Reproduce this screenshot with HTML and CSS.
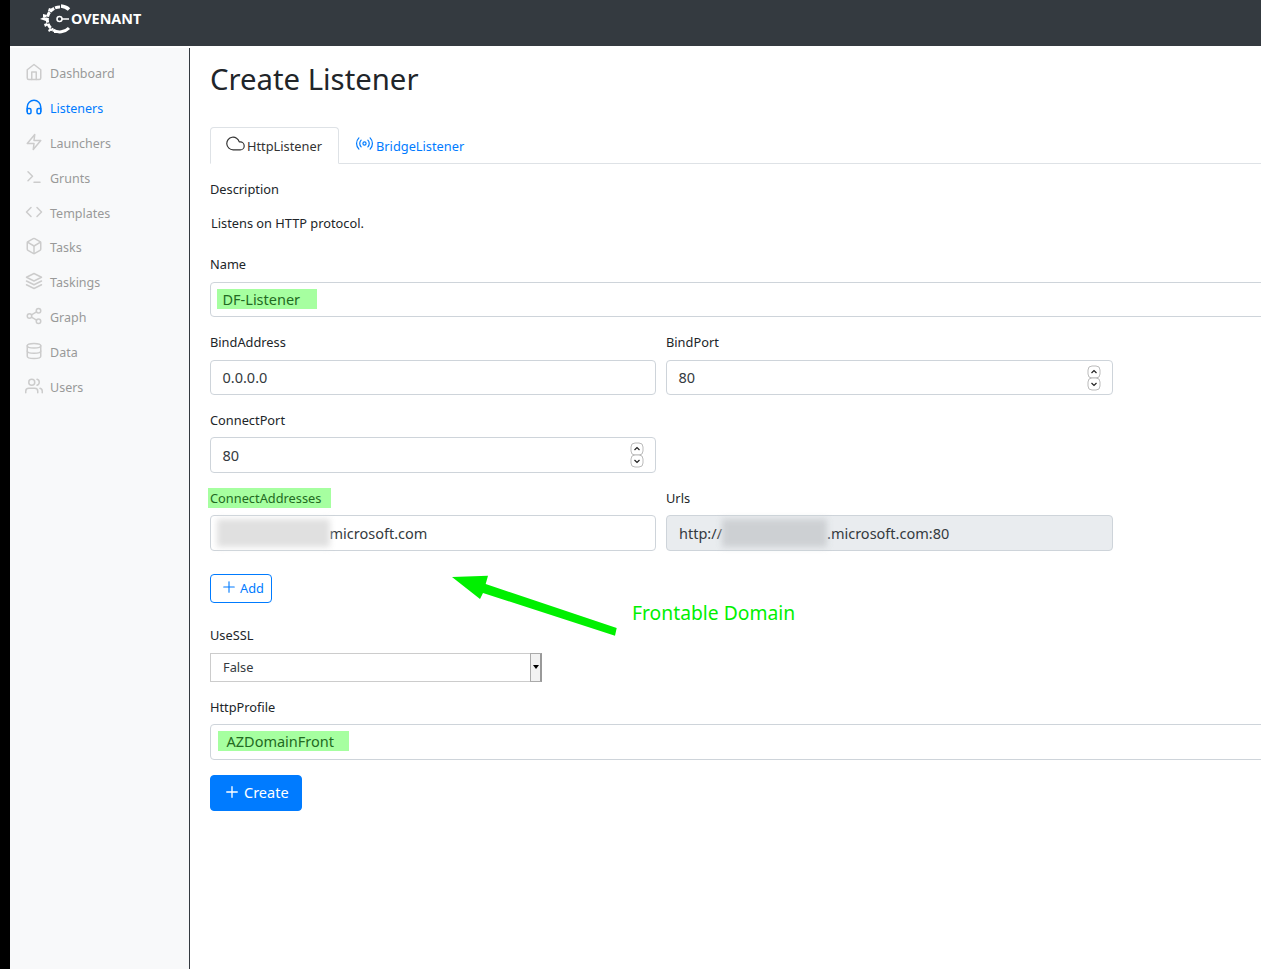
FILE: index.html
```html
<!DOCTYPE html>
<html lang="en">
<head>
    <meta charset="UTF-8">
    <meta name="viewport" content="width=device-width, initial-scale=1.0">
    <title>Create Listener</title>
    <link rel="stylesheet" href="styles.css">
</head>
<body>
    <header class="topbar">
        <a class="brand" href="#">
            <svg class="brand-mark" viewBox="0 0 36 30" width="36" height="30">
                <path d="M29 5.500a13 13 0 0 0-8-3.500" fill="none" stroke="#fff" stroke-width="3.500"/>
                <path d="M20 3a12.500 12.500 0 0 0-7 23" fill="none" stroke="#fff" stroke-width="3" stroke-dasharray="5 1"/>
                <path d="M13 26a13 13 0 0 0 16-2" fill="none" stroke="#fff" stroke-width="3"/>
                <path d="M9 4l3 1-1 3-3-1zM3 10l4 1-1 2-3 0zM0 15l4-2 3 1-1 3-3-1zM4 20l3-1 1 2-3 2zM8 26l3-2 1 2-3 2zM14 28l4-1 0 2-4 0z" fill="#fff"/>
                <circle cx="19.500" cy="15" r="2.500" fill="none" stroke="#fff" stroke-width="1.500"/>
                <path d="M22 15h7" stroke="#fff" stroke-width="1.500"/>
            </svg>
            <span class="brand-name">OVENANT</span>
        </a>
    </header>

    <div class="layout">
        <nav class="sidebar">
            <a class="nav-link" href="#">
                <svg class="icon" viewBox="0 0 24 24"><path d="M3 9l9-7 9 7v11a2 2 0 0 1-2 2H5a2 2 0 0 1-2-2z"/><polyline points="9 22 9 12 15 12 15 22"/></svg>
                Dashboard
            </a>
            <a class="nav-link active" href="#">
                <svg class="icon" viewBox="0 0 24 24"><path d="M3 18v-6a9 9 0 0 1 18 0v6"/><path d="M21 19a2 2 0 0 1-2 2h-1a2 2 0 0 1-2-2v-3a2 2 0 0 1 2-2h3zM3 19a2 2 0 0 0 2 2h1a2 2 0 0 0 2-2v-3a2 2 0 0 0-2-2H3z"/></svg>
                Listeners
            </a>
            <a class="nav-link" href="#">
                <svg class="icon" viewBox="0 0 24 24"><polygon points="13 2 3 14 12 14 11 22 21 10 12 10 13 2"/></svg>
                Launchers
            </a>
            <a class="nav-link" href="#">
                <svg class="icon" viewBox="0 0 24 24"><polyline points="4 17 10 11 4 5"/><line x1="12" y1="19" x2="20" y2="19"/></svg>
                Grunts
            </a>
            <a class="nav-link" href="#">
                <svg class="icon" viewBox="0 0 24 24"><polyline points="16 18 22 12 16 6"/><polyline points="8 6 2 12 8 18"/></svg>
                Templates
            </a>
            <a class="nav-link" href="#">
                <svg class="icon" viewBox="0 0 24 24"><path d="M21 16V8a2 2 0 0 0-1-1.730l-7-4a2 2 0 0 0-2 0l-7 4A2 2 0 0 0 3 8v8a2 2 0 0 0 1 1.730l7 4a2 2 0 0 0 2 0l7-4A2 2 0 0 0 21 16z"/><polyline points="3.270 6.960 12 12.010 20.730 6.960"/><line x1="12" y1="22.080" x2="12" y2="12"/></svg>
                Tasks
            </a>
            <a class="nav-link" href="#">
                <svg class="icon" viewBox="0 0 24 24"><polygon points="12 2 2 7 12 12 22 7 12 2"/><polyline points="2 17 12 22 22 17"/><polyline points="2 12 12 17 22 12"/></svg>
                Taskings
            </a>
            <a class="nav-link" href="#">
                <svg class="icon" viewBox="0 0 24 24"><circle cx="18" cy="5" r="3"/><circle cx="6" cy="12" r="3"/><circle cx="18" cy="19" r="3"/><line x1="8.590" y1="13.510" x2="15.420" y2="17.490"/><line x1="15.410" y1="6.510" x2="8.590" y2="10.490"/></svg>
                Graph
            </a>
            <a class="nav-link" href="#">
                <svg class="icon" viewBox="0 0 24 24"><ellipse cx="12" cy="5" rx="9" ry="3"/><path d="M21 12c0 1.660-4 3-9 3s-9-1.340-9-3"/><path d="M3 5v14c0 1.660 4 3 9 3s9-1.340 9-3V5"/></svg>
                Data
            </a>
            <a class="nav-link" href="#">
                <svg class="icon" viewBox="0 0 24 24"><path d="M17 21v-2a4 4 0 0 0-4-4H5a4 4 0 0 0-4 4v2"/><circle cx="9" cy="7" r="4"/><path d="M23 21v-2a4 4 0 0 0-3-3.870"/><path d="M16 3.130a4 4 0 0 1 0 7.750"/></svg>
                Users
            </a>
        </nav>

        <main class="content">
            <h1 class="page-title">Create Listener</h1>

            <div class="tabs">
                <a class="tab active" href="#">
                    <svg class="icon" viewBox="0 0 24 24"><path d="M18 10h-1.260A8 8 0 1 0 9 20h9a5 5 0 0 0 0-10z"/></svg>HttpListener
                </a>
                <a class="tab" href="#">
                    <svg class="icon" viewBox="0 0 24 24"><circle cx="12" cy="12" r="2"/><path d="M16.240 7.760a6 6 0 0 1 0 8.490m-8.480-.010a6 6 0 0 1 0-8.490m11.310-2.820a10 10 0 0 1 0 14.140m-14.140 0a10 10 0 0 1 0-14.140"/></svg>BridgeListener
                </a>
            </div>

            <form class="listener-form">
                <div class="label">Description</div>
                <p class="description">Listens on HTTP protocol.</p>

                <div class="field">
                    <div class="label">Name</div>
                    <div class="input marked"><span class="mark name-mark">DF-Listener</span></div>
                </div>

                <div class="form-grid">
                    <div class="field">
                        <div class="label">BindAddress</div>
                        <div class="input">0.0.0.0</div>
                    </div>
                    <div class="field">
                        <div class="label">BindPort</div>
                        <div class="input number">80
                            <svg class="spinner" viewBox="0 0 14 26" width="14" height="26"><rect x="1" y="1" width="12" height="12" rx="4"/><rect x="1" y="13" width="12" height="12" rx="4"/><path d="M4.500 8l2.500-2.500 2.500 2.500M4.500 18l2.500 2.500 2.500-2.500"/></svg>
                        </div>
                    </div>
                    <div class="field tall">
                        <div class="label">ConnectPort</div>
                        <div class="input number">80
                            <svg class="spinner" viewBox="0 0 14 26" width="14" height="26"><rect x="1" y="1" width="12" height="12" rx="4"/><rect x="1" y="13" width="12" height="12" rx="4"/><path d="M4.500 8l2.500-2.500 2.500 2.500M4.500 18l2.500 2.500 2.500-2.500"/></svg>
                        </div>
                    </div>
                    <div class="field-spacer"></div>
                    <div class="field tall">
                        <div class="label"><span class="mark label-mark">ConnectAddresses</span></div>
                        <div class="input"><span class="blur blur-left"></span>microsoft.com</div>
                    </div>
                    <div class="field tall">
                        <div class="label">Urls</div>
                        <div class="input readonly">http://<span class="blur blur-url"></span>.microsoft.com:80</div>
                    </div>
                </div>

                <button class="btn btn-outline" type="button">
                    <svg class="icon" viewBox="0 0 24 24"><line x1="12" y1="5" x2="12" y2="19"/><line x1="5" y1="12" x2="19" y2="12"/></svg>Add
                </button>

                <div class="field select-field">
                    <div class="label">UseSSL</div>
                    <div class="select">False<span class="select-arrow"></span></div>
                </div>

                <div class="field tall">
                    <div class="label">HttpProfile</div>
                    <div class="input marked"><span class="mark profile-mark">AZDomainFront</span></div>
                </div>

                <button class="btn btn-primary" type="button">
                    <svg class="icon" viewBox="0 0 24 24"><line x1="12" y1="5" x2="12" y2="19"/><line x1="5" y1="12" x2="19" y2="12"/></svg>Create
                </button>
            </form>

            <!-- annotation drawn over the screenshot -->
            <svg class="note-arrow" viewBox="0 0 170 65" width="170" height="65">
                <polygon points="0,2 36,0.700 33.700,9 164.700,53 163,60.700 31,18 28,24" fill="#00f000"/>
            </svg>
            <div class="note-text">Frontable Domain</div>
        </main>
    </div>
</body>
</html>
```

FILE: styles.css
```css
* { box-sizing: border-box; }
html, body { height: 100%; }
body { margin: 0; border-left: 10px solid #000; font-family: "Noto Sans", Arial, sans-serif; font-size: 12.8px; line-height: 21px; color: #212529; background: #fff; overflow: hidden; display: flex; flex-direction: column; }
a { text-decoration: none; }

.topbar { height: 46px; background: #343a40; flex: none; padding-left: 30px; }
.brand { display: flex; align-items: center; height: 37px; color: #fff; }
.brand-name { font-size: 14.4px; font-weight: 700; margin-left: -5px; }

.layout { flex: 1; display: flex; min-height: 0; }
.icon { width: 18px; height: 18px; fill: none; stroke: currentColor; stroke-width: 2; stroke-linecap: round; stroke-linejoin: round; }

.sidebar { width: 180px; flex: none; margin-top: 2px; padding-top: 8.4px; background: #f8f9fa; border-right: 1px solid #343a40; }
.nav-link { display: flex; align-items: center; height: 34.82px; padding-left: 15px; color: #999; gap: 7px; font-size: 12.500px; }
.nav-link .icon { color: #ccc; flex: none; margin-top: -3px; }
.nav-link.active, .nav-link.active .icon { color: #007bff; }

.content { flex: 1; min-width: 0; position: relative; padding: 0 0 0 20px; overflow: hidden; }
.page-title { margin: 0; padding-top: 13px; font-size: 29.300px; line-height: 40px; font-weight: 400; height: 81px; }

.tabs { width: 1100px; height: 37px; display: flex; border-bottom: 1px solid #dee2e6; }
.tab { display: flex; align-items: center; height: 37px; padding: 2px 16px 0 15px; color: #007bff; border: 1px solid transparent; border-radius: 4px 4px 0 0; font-size: 12.800px; gap: 2px; }
.tab .icon { margin-top: -6px; width: 19px; height: 19px; stroke-width: 1.5; }
.tab.active { color: #333; background: #fff; border-color: #dee2e6 #dee2e6 #fff; }

.listener-form { width: 1100px; padding-top: 15px; }
.label { height: 21px; margin-bottom: 7px; }
.description { margin: 0 0 26px 1px; height: 21px; padding-top: 6px; }
.field { margin-bottom: 15px; }
.field.tall .label { margin-bottom: 6px; }
.field.tall .input { height: 36px; }

.form-grid { display: grid; grid-template-columns: 446px 447px; column-gap: 10px; }

.input { height: 35px; border: 1px solid #ced4da; border-radius: 4px; padding: 0 12px 0 11.5px; display: flex; align-items: center; font-size: 14.500px; background: #fff; color: #343a40; }
.input.marked { padding-bottom: 2px; }
.input.number { justify-content: space-between; padding-right: 11px; }
.input.readonly { background: #e9ecef; padding-left: 12px; }
.spinner { fill: #fff; stroke: #555; stroke-width: 1; }
.spinner rect { stroke: #bbb; }
.spinner path { fill: none; stroke: #222; stroke-width: 1.2; }

.mark { background: #a6ffa0; color: #226a22; }
.name-mark { margin-left: -6px; padding: 0 17px 0 6px; line-height: 20px; }
.label-mark { display: inline-block; margin-left: -2px; padding: 0 10px 0 2px; line-height: 20px; }
.profile-mark { margin-left: -5px; padding: 0 15px 0 9px; line-height: 20px; }

.blur { display: block; background: #e0e0e0; filter: blur(3px); height: 28px; flex: none; }
.blur-left { width: 113px; margin: 0 0 0 -6px; }
.blur-url { width: 105px; background: #cdd0d3; }

.btn { display: flex; align-items: center; border-radius: 4px; font: inherit; }
.btn-outline { height: 29px; margin: 8px 0 22px; padding: 0 7px 0 9px; background: #fff; border: 1px solid #007bff; color: #007bff; gap: 2px; }
.btn-outline .icon { width: 18px; height: 18px; stroke-width: 1.5; margin-top: -3px; }
.btn-primary { height: 36px; padding: 0 12px 2px; background: #007bff; border: 1px solid #007bff; color: #fff; font-size: 14.500px; gap: 3px; }
.btn-primary .icon { width: 18px; height: 18px; stroke-width: 1.8; margin-top: -1px; }

.select-field { width: 332px; }
.select { height: 29px; border: 1px solid #ccc; padding-left: 12px; display: flex; align-items: center; justify-content: space-between; font-size: 12.800px; background: #fff; color: #343a40; }
.select-arrow { width: 12px; height: 29px; margin-right: -1px; background: #f2f2f2; border: 1px solid #aaa; border-right: 2px solid #999; position: relative; }
.select-arrow::after { content: ""; position: absolute; left: 2px; top: 11px; border: 3px solid transparent; border-top: 4px solid #000; }

.note-arrow { position: absolute; left: 262px; top: 529px; }
.note-text { position: absolute; left: 442px; top: 553px; color: #00f000; font-size: 19.300px; line-height: 28px; }
```
